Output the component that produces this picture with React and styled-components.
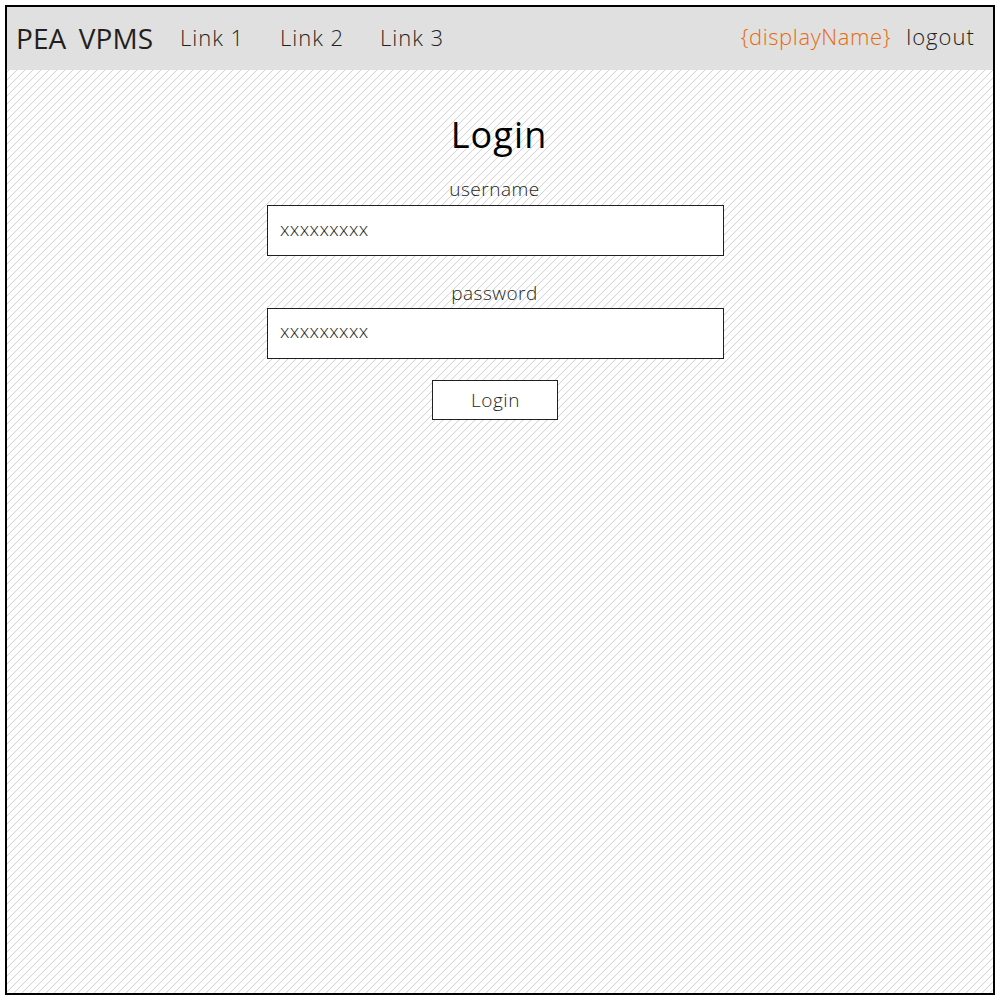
import React from "react";
import styled, { createGlobalStyle } from "styled-components";

const GlobalStyle = createGlobalStyle`
  * { box-sizing: border-box; }
  body {
    margin: 0;
    background: #fff;
    font-family: "Open Sans", "Noto Sans", sans-serif;
    font-weight: 300;
    color: #231f20;
  }
`;

const Page = styled.div`
  margin: 5px;
  height: 990px;
  width: 990px;
  border: 2px solid #000;
  background: #fff linear-gradient(135deg, transparent calc(50% - 0.8px), #d6d6d6 50%, transparent calc(50% + 0.8px)) 1px 0 / 8px 8px;
`;

const Navbar = styled.header`
  display: flex;
  align-items: center;
  justify-content: space-between;
  height: 63px;
  padding: 0 18px 0 9px;
  background: #e0e0e0;
`;

const Group = styled.div`
  display: flex;
  align-items: center;
`;

const Brand = styled.span`
  width: 164px;
  font-size: 28px;
  font-weight: 400;
  line-height: 63px;
  letter-spacing: 0.1px;
  word-spacing: 5px;
  white-space: nowrap;
`;

const NavLink = styled.a`
  width: 100px;
  padding-bottom: 2px;
  font-size: 22px;
  line-height: 61px;
  letter-spacing: 1px;
`;

const UserItem = styled.span`
  margin-left: 15px;
  padding-bottom: 5px;
  font-size: 22px;
  line-height: 58px;
  letter-spacing: ${(p) => p.$spacing};
  color: ${(p) => (p.$accent ? "#e8690b" : "#231f20")};
`;

const Form = styled.form`
  display: flex;
  flex-direction: column;
  align-items: center;
  width: 457px;
  margin: 43px 0 0 260px;
`;

const Title = styled.h1`
  margin: 0 0 0 7px;
  font-size: 36px;
  font-weight: 400;
  line-height: 44px;
  letter-spacing: 1.1px;
  color: #000;
`;

const Field = styled.div`
  display: flex;
  flex-direction: column;
  align-items: center;
  width: 100%;
  margin-top: ${(p) => p.$top}px;
`;

const Label = styled.label`
  height: ${(p) => p.$height}px;
  margin-right: 2px;
  font-size: 19px;
  line-height: 26px;
  letter-spacing: 0.5px;
`;

const Input = styled.input`
  width: 457px;
  height: 51px;
  padding: 0 12px ${(p) => p.$lift}px;
  border: 1px solid #231f20;
  border-radius: 0;
  background: #fff;
  color: #231f20;
  font: 300 19px "Open Sans", "Noto Sans", sans-serif;
  letter-spacing: 0.4px;
  outline: none;
`;

const Button = styled.button`
  width: 126px;
  height: 40px;
  margin: 21px 1px 0 0;
  padding: 0 0 0 1px;
  border: 1px solid #231f20;
  background: #fff;
  color: #231f20;
  font: 300 19px "Open Sans", "Noto Sans", sans-serif;
  letter-spacing: 0.5px;
`;

export default function App() {
  return (
    <>
      <GlobalStyle />
      <Page>
        <Navbar>
          <Group>
            <Brand>PEA VPMS</Brand>
            <NavLink>Link 1</NavLink>
            <NavLink>Link 2</NavLink>
            <NavLink>Link 3</NavLink>
          </Group>
          <Group>
            <UserItem $accent $spacing="0.6px">{"{displayName}"}</UserItem>
            <UserItem $spacing="1.05px">logout</UserItem>
          </Group>
        </Navbar>
        <Form onSubmit={(e) => e.preventDefault()}>
          <Title>Login</Title>
          <Field $top={19}>
            <Label htmlFor="username" $height={29}>username</Label>
            <Input id="username" defaultValue="xxxxxxxxx" $lift={4} />
          </Field>
          <Field $top={24}>
            <Label htmlFor="password" $height={28}>password</Label>
            <Input id="password" defaultValue="xxxxxxxxx" $lift={6} />
          </Field>
          <Button type="submit">Login</Button>
        </Form>
      </Page>
    </>
  );
}
